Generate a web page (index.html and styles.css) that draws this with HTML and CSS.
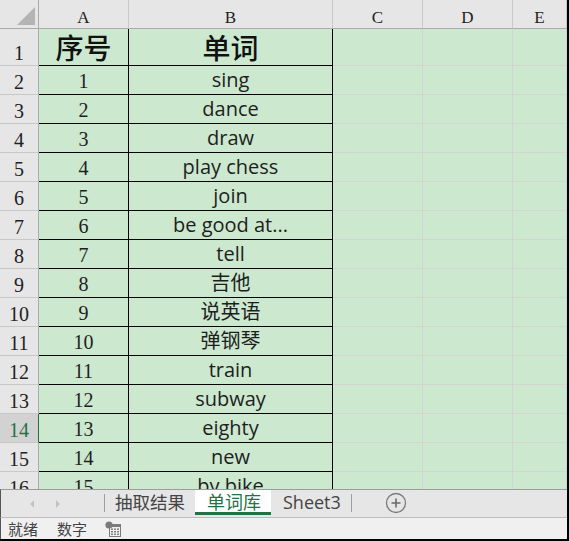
FILE: index.html
```html
<!DOCTYPE html>
<html lang="zh-CN">
<head>
<meta charset="utf-8">
<title>单词库</title>
<link rel="stylesheet" href="styles.css">
</head>
<body>
<div class="window">
  <div class="sheet">
    <div class="corner"><span class="tri"></span></div>
    <div class="ch">A</div><div class="ch">B</div><div class="ch">C</div><div class="ch">D</div><div class="ch">E</div>

    <div class="rh r1">1</div><div class="a head">序号</div><div class="b head">单词</div><div class="g"></div><div class="g"></div><div class="g"></div>
    <div class="rh">2</div><div class="a">1</div><div class="b">sing</div><div class="g"></div><div class="g"></div><div class="g"></div>
    <div class="rh">3</div><div class="a">2</div><div class="b">dance</div><div class="g"></div><div class="g"></div><div class="g"></div>
    <div class="rh">4</div><div class="a">3</div><div class="b">draw</div><div class="g"></div><div class="g"></div><div class="g"></div>
    <div class="rh">5</div><div class="a">4</div><div class="b">play chess</div><div class="g"></div><div class="g"></div><div class="g"></div>
    <div class="rh">6</div><div class="a">5</div><div class="b">join</div><div class="g"></div><div class="g"></div><div class="g"></div>
    <div class="rh">7</div><div class="a">6</div><div class="b">be good at...</div><div class="g"></div><div class="g"></div><div class="g"></div>
    <div class="rh">8</div><div class="a">7</div><div class="b">tell</div><div class="g"></div><div class="g"></div><div class="g"></div>
    <div class="rh">9</div><div class="a">8</div><div class="b">吉他</div><div class="g"></div><div class="g"></div><div class="g"></div>
    <div class="rh">10</div><div class="a">9</div><div class="b">说英语</div><div class="g"></div><div class="g"></div><div class="g"></div>
    <div class="rh">11</div><div class="a">10</div><div class="b">弹钢琴</div><div class="g"></div><div class="g"></div><div class="g"></div>
    <div class="rh">12</div><div class="a">11</div><div class="b">train</div><div class="g"></div><div class="g"></div><div class="g"></div>
    <div class="rh">13</div><div class="a">12</div><div class="b">subway</div><div class="g"></div><div class="g"></div><div class="g"></div>
    <div class="rh active">14</div><div class="a">13</div><div class="b">eighty</div><div class="g"></div><div class="g"></div><div class="g"></div>
    <div class="rh">15</div><div class="a">14</div><div class="b">new</div><div class="g"></div><div class="g"></div><div class="g"></div>
    <div class="rh">16</div><div class="a">15</div><div class="b">by bike</div><div class="g"></div><div class="g"></div><div class="g"></div>
  </div>

  <div class="tabs">
    <div class="nav">
      <span class="arrow left"></span>
      <span class="arrow right"></span>
    </div>
    <span class="sep"></span>
    <div class="tab">抽取结果</div>
    <div class="tab current">单词库</div>
    <div class="tab latin">Sheet3</div>
    <span class="sep"></span>
    <svg class="add" width="22" height="22" viewBox="0 0 22 22">
      <circle cx="11" cy="11" r="9.5" fill="none" stroke="#7a7a7a" stroke-width="1.3"/>
      <path d="M11 6.5v9M6.5 11h9" stroke="#6a6a6a" stroke-width="1.6"/>
    </svg>
  </div>

  <div class="status">
    <span class="st">就绪</span>
    <span class="st">数字</span>
    <svg class="stat-icon" width="16" height="16" viewBox="0 0 16 16">
      <rect x="4" y="3" width="12" height="13" fill="#7b7b7b"/>
      <rect x="5" y="6" width="10" height="9" fill="#f0f0f0"/>
      <g fill="#7b7b7b">
        <rect x="6" y="7.5" width="2" height="1.4"/><rect x="9" y="7.5" width="2" height="1.4"/><rect x="12" y="7.5" width="2" height="1.4"/>
        <rect x="6" y="10" width="2" height="1.4"/><rect x="9" y="10" width="2" height="1.4"/><rect x="12" y="10" width="2" height="1.4"/>
        <rect x="6" y="12.5" width="2" height="1.4"/><rect x="9" y="12.5" width="2" height="1.4"/><rect x="12" y="12.5" width="2" height="1.4"/>
      </g>
      <circle cx="4" cy="4" r="3.6" fill="#7b7b7b"/>
    </svg>
  </div>
</div>
</body>
</html>
```

FILE: styles.css
```css
html, body {
  margin: 0;
  padding: 0;
  background: #ffffff;
}

.window {
  width: 567px;
  height: 539px;
  border-right: 2px solid #000;
  border-bottom: 2px solid #000;
  overflow: hidden;
  display: flex;
  flex-direction: column;
}

.sheet {
  height: 489px;
  flex: none;
  overflow: hidden;
  display: grid;
  grid-template-columns: 39px 90px 204px 90px 90px 54px;
  grid-template-rows: 29px 37px repeat(15, 29px);
  background: #cce8cf;
}

.sheet > div {
  box-sizing: border-box;
  display: flex;
  justify-content: center;
  align-items: flex-end;
  line-height: 1;
  white-space: nowrap;
}

.corner {
  background: #e6e6e6;
  border-right: 1px solid #ababab;
  border-bottom: 1px solid #ababab;
  position: relative;
}

.tri {
  position: absolute;
  left: 17px;
  top: 7px;
  width: 18px;
  height: 18px;
  background: #b4b4b4;
  clip-path: polygon(100% 0, 100% 100%, 0 100%);
}

.ch {
  background: #e6e6e6;
  border-right: 1px solid #c8c8c8;
  border-bottom: 1px solid #ababab;
  font-family: "Liberation Serif", serif;
  font-size: 17px;
  color: #222;
  padding-bottom: 2px;
}

.rh {
  background: #e6e6e6;
  border-right: 1px solid #ababab;
  border-bottom: 1px solid #c8c8c8;
  font-family: "Liberation Serif", serif;
  font-size: 20px;
  color: #222;
  padding-bottom: 2px;
}

.rh.active {
  background: #d2d2d2;
  color: #217346;
  border-right: 1px solid #217346;
}

.a, .b {
  border-right: 1px solid #000;
  border-bottom: 1px solid #000;
  color: #1e1e1e;
}

.a {
  font-family: "Liberation Serif", serif;
  font-size: 20px;
  padding-bottom: 3px;
}

.b {
  font-family: "Open Sans", "Noto Sans CJK SC", sans-serif;
  font-size: 20px;
  padding-bottom: 2px;
  line-height: 1.2 !important;
}

.head {
  font-family: "Noto Sans CJK SC", sans-serif !important;
  font-size: 28px !important;
  font-weight: 500;
  color: #111;
  padding-bottom: 0 !important;
  line-height: 1.25 !important;
}

.g {
  border-right: 1px solid #d4d4d4;
  border-bottom: 1px solid #d4d4d4;
}

.tabs {
  flex: none;
  height: 29px;
  box-sizing: border-box;
  border-top: 1px solid #9c9c9c;
  border-bottom: 1px solid #bdbdbd;
  border-left: 1px solid #555;
  background: #e6e6e6;
  display: flex;
  align-items: stretch;
}

.nav {
  width: 103px;
  display: flex;
  align-items: center;
  padding-left: 29px;
  box-sizing: border-box;
  gap: 22px;
}

.arrow {
  width: 0;
  height: 0;
  border-top: 4px solid transparent;
  border-bottom: 4px solid transparent;
}

.arrow.left { border-right: 4px solid #c3c3c3; }
.arrow.right { border-left: 4px solid #c3c3c3; }

.sep {
  width: 1px;
  background: #9e9e9e;
  margin: 4px 0 5px;
}

.tab {
  padding: 0 10px 4px 10px;
  font-family: "Noto Sans CJK SC", sans-serif;
  font-size: 17.5px;
  color: #444;
  display: flex;
  align-items: center;
  box-sizing: border-box;
}

.tab.current {
  background: #fff;
  color: #217346;
  font-size: 18px;
  border-bottom: 3px solid #217346;
  padding: 0 10px 1px 12px;
  margin-bottom: 2px;
}

.tab.latin {
  font-family: "Open Sans", sans-serif;
  font-size: 18px;
  padding: 0 10px 4px 12px;
}

.add {
  align-self: center;
  margin-left: 33px;
  margin-bottom: 1px;
}

.status {
  flex: 1;
  background: #f0f0f0;
  border-left: 1px solid #555;
  display: flex;
  align-items: center;
  padding-left: 7px;
  gap: 19px;
}

.st {
  font-family: "Noto Sans CJK SC", sans-serif;
  font-size: 15px;
  color: #444;
  line-height: 1;
}

.stat-icon {
  margin-left: -1px;
}
```
